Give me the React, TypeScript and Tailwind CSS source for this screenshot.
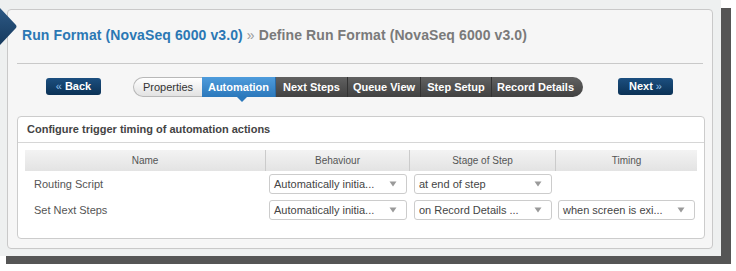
import React from "react";

const Caret = () => (
  <svg width="8" height="6" viewBox="0 0 8 6" className="shrink-0">
    <path d="M0.5 0.5 L7.5 0.5 L4 5.5 Z" fill="#9a9a9a" />
  </svg>
);

const Select = ({ text, w = "w-[138px]", ml = "ml-[4px]" }: { text: string; w?: string; ml?: string }) => (
  <div
    className={`${w} ${ml} h-[20px] border border-[#cccccc] rounded-[3px] bg-white flex items-center justify-between pl-[4px] pr-[9px] text-[11px] text-[#454545]`}
  >
    <span className="whitespace-nowrap">{text}</span>
    <Caret />
  </div>
);

export default function App() {
  const tabs = [
    { label: "Next Steps", w: "w-[72px]" },
    { label: "Queue View", w: "w-[73px]" },
    { label: "Step Setup", w: "w-[71px]" },
  ];
  return (
    <div className="w-[736px] h-[271px] bg-white relative overflow-hidden" style={{ fontFamily: '"Liberation Sans", Arial, sans-serif' }}>
      <div className="w-[721px] h-[256px] bg-[#eef0f0] shadow-[10px_8px_0_0_#555555,6px_8px_0_0_#555555] pt-[9px] pl-[7px]">
        <div className="w-[706px] h-[240px] bg-[#f6f6f6] border border-[#c9c9c9] rounded-[4px] flex flex-col">
          {/* title */}
          <div className="pl-[14px] pt-[17px] h-[43px] text-[14px] leading-[16px] font-bold whitespace-nowrap tracking-[0.1px]">
            <span className="text-[#2b78b4]">Run Format (NovaSeq 6000 v3.0)</span>
            <span className="text-[#9a9a9a] font-normal"> » </span>
            <span className="text-[#7a7a7a]">Define Run Format (NovaSeq 6000 v3.0)</span>
          </div>
          <div className="mx-[9px] h-px bg-[#c9c9c9] mt-[10px]" />
          {/* buttons row */}
          <div className="flex items-start mt-[13px] h-[39px]">
            <div className="ml-[38px] mt-[1px] w-[55px] h-[17px] rounded-[3px] bg-gradient-to-b from-[#1c4f80] to-[#0b3256] flex items-center justify-center text-[11px] font-bold text-white">
              <span className="text-[#8fc0ee] font-normal mr-[3px]">«</span>Back
            </div>
            <div className="ml-[32px] flex flex-col items-start">
              <div className="flex h-[20px] text-[11px]">
                <div className="w-[69px] h-full rounded-l-full border border-[#b8b8b8] border-r-0 bg-gradient-to-b from-white to-[#e2e2e2] flex items-center justify-center text-[#333333]">
                  Properties
                </div>
                <div className="w-[74px] h-full bg-gradient-to-b from-[#4e9cdc] to-[#2b78bb] flex items-center justify-center text-white font-bold border-r border-[#2a6aa5]">
                  Automation
                </div>
                {tabs.map((t) => (
                  <div
                    key={t.label}
                    className={`${t.w} h-full bg-gradient-to-b from-[#616161] to-[#414141] flex items-center justify-center text-white font-bold border-r border-[#333333]`}
                  >
                    {t.label}
                  </div>
                ))}
                <div className="w-[91px] h-full rounded-r-full bg-gradient-to-b from-[#616161] to-[#414141] flex items-center justify-center text-white font-bold pr-[4px]">
                  Record Details
                </div>
              </div>
              <svg width="10" height="5" viewBox="0 0 10 5" className="ml-[104px]">
                <path d="M0 0 L10 0 L5 5 Z" fill="#2b78bb" />
              </svg>
            </div>
            <div className="ml-[35px] mt-[1px] w-[55px] h-[17px] rounded-[3px] bg-gradient-to-b from-[#1c4f80] to-[#0b3256] flex items-center justify-center text-[11px] font-bold text-white">
              Next<span className="text-[#8fc0ee] font-normal ml-[3px]">»</span>
            </div>
          </div>
          {/* config box */}
          <div className="ml-[9px] w-[688px] h-[123px] bg-white border border-[#cccccc] rounded-[4px] flex flex-col">
            <div className="h-[26px] border-b border-[#d6d6d6] flex items-center pl-[9px] text-[11px] font-bold text-[#444444]">
              Configure trigger timing of automation actions
            </div>
            <div className="px-[7px] pt-[7px]">
              <div className="grid grid-cols-[240px_144px_146px_142px] h-[21px] bg-gradient-to-b from-[#f3f3f3] to-[#e3e3e3] text-[10px] text-[#555555]">
                <div className="flex items-center justify-center">Name</div>
                <div className="flex items-center justify-center border-l border-[#cbcbcb]">Behaviour</div>
                <div className="flex items-center justify-center border-l border-[#cbcbcb]">Stage of Step</div>
                <div className="flex items-center justify-center border-l border-[#cbcbcb]">Timing</div>
              </div>
              <div className="grid grid-cols-[240px_144px_146px_142px] h-[26px] items-center text-[11px] text-[#555555]">
                <div className="pl-[9px]">Routing Script</div>
                <Select text="Automatically initia..." />
                <Select text="at end of step" ml="ml-[5px]" w="w-[138px]" />
                <div />
              </div>
              <div className="grid grid-cols-[240px_144px_146px_142px] h-[26px] items-center text-[11px] text-[#555555]">
                <div className="pl-[9px]">Set Next Steps</div>
                <Select text="Automatically initia..." />
                <Select text="on Record Details ..." ml="ml-[5px]" w="w-[138px]" />
                <Select text="when screen is exi..." ml="ml-[3px]" w="w-[137px]" />
              </div>
            </div>
          </div>
        </div>
      </div>
      <svg width="18" height="38" viewBox="0 0 18 38" className="absolute left-0 top-[8px]">
        <defs>
          <linearGradient id="ar" x1="0" y1="0" x2="0" y2="1">
            <stop offset="0" stopColor="#2d5985" />
            <stop offset="1" stopColor="#163a5e" />
          </linearGradient>
        </defs>
        <path d="M0 0 L15.5 16.5 Q17.5 18.5 15.5 20.5 L0 37 Z" fill="url(#ar)" />
      </svg>
    </div>
  );
}
